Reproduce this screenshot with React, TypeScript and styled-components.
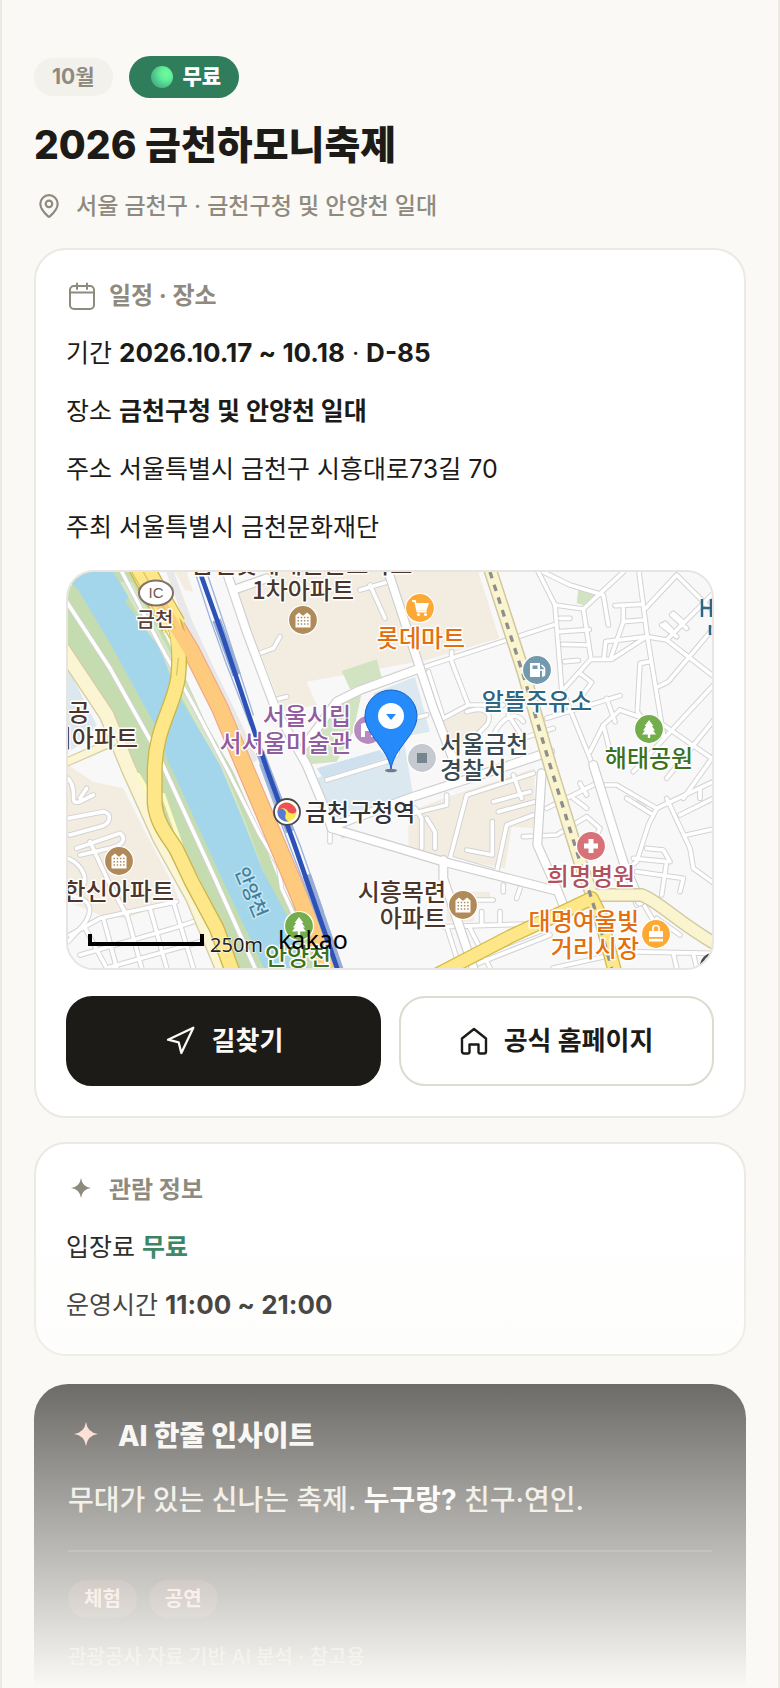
import React from "react";
import styled, { createGlobalStyle, css } from "styled-components";
import { MapPin, Navigation } from "lucide-react";

const FONT = `Inter, "Noto Sans CJK KR", sans-serif`;
const MAP_FONT = `"Noto Sans CJK KR", "Noto Sans", sans-serif`;

const c = {
  paper: "#faf9f5",
  ink: "#1c1b17",
  muted: "#8f8a7e",
  line: "#ebe9e2",
  green: "#2f7d5b",
};

const GlobalStyle = createGlobalStyle`
  *, *::before, *::after { box-sizing: border-box; }
  body { margin: 0; background: ${c.paper}; color: ${c.ink}; font-family: ${FONT}; }
  h1, h2, p { margin: 0; }
`;

const Screen = styled.main`
  position: relative;
  height: 100vh;
  overflow: hidden;
  padding: 56px 32px 0;
  border: solid ${c.line};
  border-width: 0 2px;
  background: ${c.paper};
`;

const Fade = styled.div`
  position: absolute;
  inset: auto 0 0;
  height: 476px;
  background: linear-gradient(to bottom, rgba(250, 249, 245, 0), ${c.paper});
  pointer-events: none;
`;

const Badges = styled.div`
  display: flex;
  align-items: center;
  gap: 16px;
  height: 42px;
`;

const Badge = styled.span<{ $free?: boolean }>`
  display: inline-flex;
  align-items: center;
  gap: 10px;
  height: 38px;
  padding: 0 18px;
  border-radius: 21px;
  font-size: 21px;
  line-height: 30px;
  font-weight: 700;
  color: ${c.muted};
  background: #f3f1ec;
  ${(p) =>
    p.$free &&
    css`
      height: 42px;
      padding: 0 18px 0 22px;
      font-weight: 800;
      color: #fff;
      background: ${c.green};
    `}
`;

const Orb = styled.i`
  width: 22px;
  height: 22px;
  border-radius: 50%;
  background: radial-gradient(circle at 70% 35%, #6cfba0 0, #62ee98 30%, #47b888 70%, #4c9c9c 100%);
`;

const Title = styled.h1`
  margin-top: 18px;
  font-size: 39px;
  line-height: 58px;
  font-weight: 800;
`;

const Place = styled.p`
  display: flex;
  align-items: center;
  gap: 14px;
  margin: 14px 0 24px 2px;
  font-size: 23px;
  line-height: 36px;
  font-weight: 500;
  color: ${c.muted};
`;

const Card = styled.section<{ $foot: number }>`
  margin-bottom: 24px;
  padding: 28px 30px ${(p) => p.$foot}px;
  border: 2px solid ${c.line};
  border-radius: 32px;
  background: #fff;
`;

const CardTitle = styled.h2`
  display: flex;
  align-items: center;
  gap: 13px;
  margin-bottom: 10px;
  font-size: 24px;
  line-height: 36px;
  font-weight: 700;
  color: ${c.muted};
`;

const Row = styled.p`
  font-size: 25px;
  line-height: 58px;
  font-weight: 400;
  strong { font-weight: 700; }
`;

const Figures = styled.strong`
  font-size: 26px;
`;

const Free = styled.strong`
  color: ${c.green};
`;

const MapFrame = styled.div`
  height: 400px;
  margin: 14px 0 26px;
  overflow: hidden;
  border: 2px solid #e8e4df;
  border-radius: 28px;
  background: #f8f8f8;
  svg { display: block; width: 100%; height: 100%; }
`;

const Actions = styled.div`
  display: grid;
  grid-template-columns: 1fr 1fr;
  gap: 18px;
`;

const Action = styled.button<{ $dark?: boolean }>`
  display: flex;
  align-items: center;
  justify-content: center;
  gap: 16px;
  height: 90px;
  padding: 0;
  border: 2px solid ${(p) => (p.$dark ? c.ink : "#dddad0")};
  border-radius: 26px;
  font: 700 26px/36px ${FONT};
  color: ${(p) => (p.$dark ? c.paper : c.ink)};
  background: ${(p) => (p.$dark ? c.ink : "#fff")};
`;

const Insight = styled.section`
  margin-top: 28px;
  padding: 32px 34px;
  border-radius: 34px;
  color: #f1f0ec;
  background: ${c.ink};
`;

const InsightTitle = styled.h2`
  display: flex;
  align-items: center;
  gap: 14px;
  font-size: 28px;
  line-height: 40px;
  font-weight: 800;
  color: #f6f5f1;
`;

const InsightText = styled.p`
  margin-top: 22px;
  padding-bottom: 28px;
  border-bottom: 2px solid #3d3c38;
  font-size: 28px;
  line-height: 44px;
  font-weight: 500;
  color: #e6e4dc;
  strong { font-weight: 700; color: #fff; }
`;

const Tags = styled.div`
  display: flex;
  gap: 12px;
  margin-top: 28px;
`;

const Tag = styled.span`
  padding: 0 16px;
  border-radius: 19px;
  font-size: 20px;
  line-height: 38px;
  font-weight: 700;
  color: #f9c9bd;
  background: #46312b;
`;

const Note = styled.p`
  margin-top: 24px;
  padding-bottom: 16px;
  font-size: 20px;
  line-height: 30px;
  font-weight: 500;
  color: #a8a498;
`;

const CalendarIcon = () => (
  <svg width="30" height="28" viewBox="0 0 30 28" fill="none" stroke="currentColor" strokeWidth="2" strokeLinecap="round" aria-hidden="true">
    <rect x="4" y="4" width="24" height="23" rx="4" />
    <path d="M4 10.500H28M11 1.500V7M21 1.500V7" />
  </svg>
);

const HomeIcon = () => (
  <svg width="28" height="28" viewBox="0 0 28 28" fill="none" stroke="currentColor" strokeWidth="2.400" strokeLinecap="round" strokeLinejoin="round" aria-hidden="true">
    <path d="M2 11.500 14 2 26 11.500V24.500A2 2 0 0 1 24 26.500H20A1.500 1.500 0 0 1 18.500 25V17.500H9.500V25A1.500 1.500 0 0 1 8 26.500H4A2 2 0 0 1 2 24.500Z" />
  </svg>
);

const SparkIcon = ({ box, r, fill }: { box: number; r: number; fill: string }) => (
  <svg width={box} height={box} viewBox={`${-box / 2} ${-box / 2 + 2} ${box} ${box}`} fill={fill} aria-hidden="true">
    <path d={`M0 ${-r}Q${r * 0.12} ${-r * 0.12} ${r} 0Q${r * 0.12} ${r * 0.12} 0 ${r}Q${-r * 0.12} ${r * 0.12} ${-r} 0Q${-r * 0.12} ${-r * 0.12} 0 ${-r}Z`} />
  </svg>
);

/* ---- map ---- */

const STREETS = [
  "M1435 21 1485 120 1505 370 1590 580 1610 640",
  "M1485 120 1570 132 1690 21",
  "M1450 21 1530 60 1630 90 1645 180",
  "M1570 132 1592 275",
  "M1095 305 1480 180",
  "M1512 372 1592 283 1655 283 1760 215 1820 225 1956 330",
  "M1737 21 1762 215 1812 520",
  "M1757 130 1850 30 1970 150",
  "M1820 225 1970 75",
  "M1632 280 1637 230 1760 215",
  "M1665 122 1742 118M1690 125V170L1750 165M1652 280 1690 170",
  "M1500 200 1588 194M1508 238 1585 240M1514 290 1555 286M1500 160 1530 160M1560 325 1595 352 1560 400",
  "M1795 365 1825 350 1960 190M1815 175 1835 195M1840 145 1868 170M1805 180 1850 215M1835 150 1880 190",
  "M1780 510 1732 440 1740 295 1770 290",
  "M1680 435 1630 480 1590 560M1680 435 1750 460 1810 480 1970 590",
  "M1630 480 1655 580M1640 400 1665 470",
  "M1820 640 1970 455M1720 620 1970 350M1870 700 1970 560",
  "M1175 260V290L1225 420H1330M1105 320 1150 460 1225 420",
  "M1460 460 1680 392M1345 450 1390 520 1480 490",
  "M1220 440C1280 420 1300 450 1280 480L1240 520M1300 510C1330 450 1370 440 1390 470",
  "M1460 730 1600 660H1670L1790 730 1970 645",
  "M1540 700 1580 730M1560 655 1580 690",
  "M1790 730 1765 780 1730 890 1670 940",
  "M1820 700 1890 850 1900 910 1970 960",
  "M1390 815 1490 810 1580 755 1620 790 1600 830",
  "M1720 880 1820 890 1805 990M1730 920 1870 940 1860 980M1760 850 1810 855 1830 890M1880 810 1970 790M1860 750 1960 700M1920 700V670",
  "M1710 960 1730 1020M1700 700 1780 750",
  "M1170 880 1220 690 1420 625M1170 880 1310 920 1340 780 1420 750",
  "M1300 710 1410 680M1360 630 1385 700M1315 740 1425 710M1297 770V870L1220 855",
  "M1065 730 1085 760V850M1100 760 1125 800V850M1040 750 1160 720V690",
  "M1150 1085 1470 1075M1160 1085 1200 1209M1230 1090 1290 1209M1265 1080V1040M1320 1070V1040M1230 1005H1300",
  "M1200 1190 1450 1095M1220 1209 1470 1110M1480 1209 1700 1160 1956 1165M1840 1165 1850 1209M1900 1165 1910 1209",
  "M1740 1000 1800 1100M1790 1060 1860 1110",
  "M1330 960V980M1380 970 1370 1000",
  "M24 640C60 680 20 720 60 710L100 690M60 700 80 670",
  "M24 760 130 740C160 745 150 780 120 785L30 810M50 850 180 805C200 820 190 840 150 850L60 870M90 830 150 960 200 1050",
  "M24 880C70 900 90 950 60 970M24 990C100 1000 100 1040 70 1080L24 1130M70 1080 140 1209",
  "M30 1110 120 1060 350 1010M60 1170 340 1090 430 1060M140 1209 420 1130M130 1060 170 1209M200 1045 245 1209M270 1030 320 1209M340 1010 400 1209",
  "M900 75 985 50M930 60 975 160M600 265 640 250 660 215",
  "M640 405 680 395M810 800V830M850 785V810",
  "M800 645 980 590M1010 570 1020 470 1100 450",
];

const MAJOR = [
  "M500 21 560 200 650 440 740 600 790 720 815 790",
  "M735 540 830 410 900 375 1080 310 985 21",
  "M1080 310 1120 430 1190 610",
  "M815 785 1060 695 1230 640 1470 560",
  "M815 790 1000 845 1150 890 1480 975",
  "M520 75 620 40",
  "M1445 625 1432 840 1490 970 1510 1020",
  "M1600 600 1690 890 1740 1010",
  "M1150 885V940L1200 1090 1240 1209",
];

type LabelProps = {
  x: number;
  y: number;
  color?: string;
  anchor?: "start" | "middle" | "end";
  size?: number;
  transform?: string;
  halo?: string;
  children: string;
};

const MapLabel = ({ x, y, color = "#4d3629", anchor = "middle", size = 24, transform, halo = "#fff", children }: LabelProps) => (
  <text
    x={x}
    y={y}
    fill={color}
    textAnchor={anchor}
    fontSize={size}
    fontWeight={500}
    stroke={halo}
    strokeWidth="3"
    strokeLinejoin="round"
    paintOrder="stroke"
    transform={transform}
  >
    {children}
  </text>
);

const Pin = ({ x, y, fill, children }: { x: number; y: number; fill: string; children?: React.ReactNode }) => (
  <g transform={`translate(${x} ${y})`}>
    <circle r="14.500" fill={fill} stroke="#fff" strokeWidth="1.200" />
    {children}
  </g>
);

const Apartment = () => (
  <>
    <path d="M-7.500 7.500V-4.500L-4-7.500-.500-4.500H.500L4-7.500 7.500-4.500V7.500Z" fill="#fff" />
    <path d="M-5.500-2.500H6M-5.500.700H6M-5.500 4H6" stroke="#b08a58" strokeWidth="1.500" strokeDasharray="1.500 1.700" />
  </>
);

const Tree = () => (
  <path d="M0-9 4.500-3H2.800L6 1.500H4L7 5.500H1.200V9H-1.200V5.500H-7L-4 1.500H-6L-2.800-3H-4.500Z" fill="#fff" />
);

const FestivalMap = () => (
  <svg viewBox="0 0 644 396" preserveAspectRatio="xMidYMid slice" role="img" aria-label="금천구청 주변 지도" fontFamily={MAP_FONT}>
    <rect width="644" height="396" fill="#f8f8f8" />
    <g transform="scale(.33333) translate(-24 -21)" fill="none" strokeLinejoin="round" strokeLinecap="round">
      {/* blocks */}
      <path fill="#f3ece1" d="M520 60 640 21H1255L1318 220 1100 285 740 350 770 420 670 440ZM345 21 375 75 400 80 380 21ZM24 600 100 650 190 670 250 790 340 960 355 1000 200 1060 120 1050 24 1010ZM1140 450 1220 430 1290 450 1250 530 1170 560ZM1045 740 1180 690 1425 610 1420 790 1355 785 1335 910 1170 880 1045 850ZM1160 980H1290V1000L1250 1010 1240 1070H1160Z" />
      <path fill="#dce8f0" d="M940 385 1065 335 1110 500 1030 515 1060 695 820 760 770 640 985 555ZM24 310 110 480 60 540 24 560ZM1740 695 1770 720 1740 735 1715 720Z" />
      <path fill="#cfe0ee" d="M770 610 960 555 975 580 790 640Z" />
      <path fill="#d2e3c2" d="M845 318 950 283 965 335 870 372ZM800 430 905 385 880 500 830 590 730 600 730 560ZM1555 72 1610 92 1590 125 1550 115Z" />
      <path fill="#f3ece1" d="M24 1180 60 1209H24Z" />

      {/* city streets */}
      {STREETS.map((d) => <path key={d} d={d} stroke="#d3d3d3" strokeWidth="17" />)}
      {STREETS.map((d) => <path key={d} d={d} stroke="#fff" strokeWidth="11" />)}
      {MAJOR.map((d) => <path key={d} d={d} stroke="#cfcfcf" strokeWidth="30" />)}
      {MAJOR.map((d) => <path key={d} d={d} stroke="#fff" strokeWidth="23" />)}

      {/* stream and its banks */}
      <path fill="#c5dcb0" d="M0 21H215L310 200 340 260 440 480 520 620 600 800 650 930 720 1060 790 1209H530L400 930 310 760 200 600 130 450 0 210Z" />
      <path fill="#d5e6c4" d="M180 50 300 270 470 600 560 800 640 1000 560 780 440 480 340 280 215 50Z" />
      <path fill="#a3d6ea" d="M24 21H160L205 95 195 110 300 250 350 380 480 600 555 780 610 920 680 1050 745 1209H612L490 950 325 590 290 490 150 235 55 75 24 45Z" />
      <path stroke="#d3d3d3" strokeWidth="16" d="M0 80 150 310 290 560 345 680 460 930 590 1220" />
      <path stroke="#fff" strokeWidth="11" d="M0 80 150 310 290 560 345 680 460 930 590 1220" />
      <path stroke="#d3d3d3" strokeWidth="15" d="M180 10 300 240 400 420 500 610 600 810 655 900 665 970 720 1090" />
      <path stroke="#fff" strokeWidth="10" d="M180 10 300 240 400 420 500 610 600 810 655 900 665 970 720 1090" />

      {/* riverside road */}
      <path stroke="#d6cda2" strokeWidth="48" strokeLinecap="butt" d="M0 240 140 450 205 610 300 820 400 1000 500 1240" />
      <path stroke="#fbf5d3" strokeWidth="40" strokeLinecap="butt" d="M0 240 140 450 205 610 300 820 400 1000 500 1240" />
      <path stroke="#d6cda2" strokeWidth="28" d="M0 600 160 530" />
      <path stroke="#fbf5d3" strokeWidth="21" d="M0 600 160 530" />
      <path stroke="#fffac4" strokeWidth="12" d="M235 630 275 700M310 690 370 860 470 1060" />

      {/* expressway */}
      <path stroke="#e8e8e8" strokeWidth="22" d="M330 21 385 170 460 330 520 450 580 580" />
      <path stroke="#f0a886" strokeWidth="54" strokeLinecap="butt" d="M305 110 395 260 480 430 560 620 640 810 720 1000 812 1230" />
      <path stroke="#fecb7e" strokeWidth="47" strokeLinecap="butt" d="M305 110 395 260 480 430 560 620 640 810 720 1000 812 1230" />
      <path stroke="#cbb64e" strokeWidth="78" strokeLinecap="butt" d="M240 0 300 110 340 180" />
      <path stroke="#fee788" strokeWidth="70" strokeLinecap="butt" d="M240 0 300 110 345 188" />
      <path stroke="#cbb64e" strokeWidth="48" d="M345 180C365 240 357 310 354 340 340 430 285 490 284 620V715C290 780 330 820 350 855L395 950 470 1090 525 1240" />
      <path stroke="#fee788" strokeWidth="40" d="M340 170C365 240 357 310 354 340 340 430 285 490 284 620V715C290 780 330 820 350 855L395 950 470 1090 525 1240" />
      <path stroke="#fecb7e" strokeWidth="34" strokeLinecap="butt" d="M305 120 400 275" />
      <path stroke="#d9c660" strokeWidth="4" d="M215 21 330 220M250 21 345 190M355 280 350 330" />

      {/* railway */}
      <path stroke="#9db3dc" strokeWidth="4" d="M408 30 450 160 500 300 570 480M440 21 500 200 580 450M640 640 720 840 790 1040M600 600 680 820 780 1080" />
      <path stroke="#98add6" strokeWidth="26" strokeLinecap="butt" d="M470 165 530 330M600 560 690 800M740 930 840 1220" />
      <path stroke="#2d52b7" strokeWidth="14" d="M425 36 485 205 560 430 620 610 700 830 835 1220" />

      {/* arterial roads */}
      <path stroke="#cfc8a0" strokeWidth="42" strokeLinecap="butt" d="M1286 0 1390 320 1470 600 1560 890 1600 1000M1600 990H1745C1800 1010 1860 1080 1990 1150" />
      <path stroke="#fbf5cf" strokeWidth="33" strokeLinecap="butt" d="M1286 0 1390 320 1470 600 1560 890 1600 1000M1600 990H1745C1800 1010 1860 1080 1990 1150" />
      <path stroke="#d3bd4b" strokeWidth="44" d="M1110 1240 1350 1115 1500 1045 1595 1000 1620 1050 1670 1240" />
      <path stroke="#fee788" strokeWidth="36" d="M1110 1240 1350 1115 1500 1045 1595 1000 1620 1050 1670 1240" />
      <path stroke="#8e8e8e" strokeWidth="10" strokeLinecap="butt" strokeDasharray="20 20" d="M1290 21 1390 330 1470 600 1560 890 1610 1050 1655 1209" />
    </g>

    {/* places */}
    <ellipse cx="88" cy="21" rx="17" ry="12.500" fill="#fff" stroke="#84706a" strokeWidth="2" />
    <text x="88" y="26" textAnchor="middle" fontSize="15" fontFamily="Liberation Sans, sans-serif" fill="#6b5a52">IC</text>
    <MapLabel x={87} y={55} size={20} color="#5a4035">금천</MapLabel>
    <MapLabel x={234} y={1}>금천롯데캐슬골드파크</MapLabel>
    <MapLabel x={235} y={27}>1차아파트</MapLabel>
    <Pin x={235} y={48} fill="#b08a58"><Apartment /></Pin>

    <Pin x={352} y={36} fill="#fda935">
      <path d="M-8-7H-5L-2.500 3.500H6.500" fill="none" stroke="#fff" strokeWidth="1.800" />
      <path d="M-4.500-5H9L6.500 2.500H-2.700Z" fill="#fff" />
      <circle cx="-1.500" cy="6.500" r="1.500" fill="#fff" />
      <circle cx="5.500" cy="6.500" r="1.500" fill="#fff" />
    </Pin>
    <MapLabel x={353} y={75} color="#e2700f">롯데마트</MapLabel>

    <Pin x={469} y={98} fill="#7299ad">
      <path d="M-7-7H3V7H-7Z" fill="#fff" />
      <path d="M-4.500-4.500H.500V-1H-4.500Z" fill="#7299ad" />
      <path d="M4.500-5 7.500-2V4Q7.500 6 5.800 6V0H3" fill="none" stroke="#fff" strokeWidth="1.600" />
    </Pin>
    <MapLabel x={469} y={138} color="#2f6681">알뜰주유소</MapLabel>

    <Pin x={581} y={157} fill="#74ad4c"><Tree /></Pin>
    <MapLabel x={581} y={195} color="#3a7320">해태공원</MapLabel>

    <MapLabel x={283} y={153} anchor="end" color="#915ca0">서울시립</MapLabel>
    <MapLabel x={284} y={180} anchor="end" color="#915ca0">서서울미술관</MapLabel>
    <Pin x={300} y={158} fill="#b78bbf">
      <path d="M-7-6Q-2-9 0-6H7V7H3V1H-3V7H-7Z" fill="#fff" />
    </Pin>

    <Pin x={354} y={186} fill="#c6c9cf"><rect x="-5" y="-5" width="10" height="10" fill="#74868e" /></Pin>
    <MapLabel x={372} y={181} anchor="start" color="#3b4a50">서울금천</MapLabel>
    <MapLabel x={372} y={207} anchor="start" color="#3b4a50">경찰서</MapLabel>

    <g transform="translate(219 240)">
      <circle r="13" fill="#fff" stroke="#4a4a4a" strokeWidth="1.800" />
      <circle r="9.500" fill="#fdea50" />
      <path d="M-9.500-1A9.500 9.500 0 0 1-3-9.200Q5-11 9.500-2 9 2 5 1.500 1 1 0-2-3-5-6.500-3Q-9-2-9.500-1Z" fill="#ee5257" />
      <path d="M-9.500-1Q-8-4-4-3 0-1-1.500 3-3 8 2 9.300A9.500 9.500 0 0 1-9.500-1Z" fill="#5879d4" />
    </g>
    <MapLabel x={237} y={249} anchor="start" color="#333">금천구청역</MapLabel>

    <MapLabel x={22} y={149} anchor="end">공</MapLabel>
    <MapLabel x={70} y={175} anchor="end">지아파트</MapLabel>
    <Pin x={51} y={289} fill="#b08a58"><Apartment /></Pin>
    <MapLabel x={106} y={328} anchor="end">한신아파트</MapLabel>

    <MapLabel x={0} y={0} size={19} color="#41809f" halo="#c5e5f1" transform="translate(177 323) rotate(67)">안양천</MapLabel>

    <Pin x={231} y={354} fill="#74ad4c"><Tree /></Pin>
    <MapLabel x={230} y={393} color="#3a7320">안양천</MapLabel>

    <Pin x={523} y={274} fill="#d87279"><path d="M-2.500-7H2.500V-2.500H7V2.500H2.500V7H-2.500V2.500H-7V-2.500H-2.500Z" fill="#fff" /></Pin>
    <MapLabel x={523} y={313} color="#b4505c">희명병원</MapLabel>

    <MapLabel x={378} y={329} anchor="end">시흥목련</MapLabel>
    <MapLabel x={378} y={355} anchor="end">아파트</MapLabel>
    <Pin x={395} y={333} fill="#b08a58"><Apartment /></Pin>

    <MapLabel x={571} y={358} anchor="end" color="#e2700f">대명여울빛</MapLabel>
    <MapLabel x={571} y={385} anchor="end" color="#e2700f">거리시장</MapLabel>
    <Pin x={588} y={362} fill="#fda935">
      <path d="M-7-3H7V3H-7ZM-7 4.800H7V7.500H-7Z" fill="#fff" />
      <path d="M-3-3V-6A3 2.500 0 0 1 3-6V-3" fill="none" stroke="#fff" strokeWidth="1.600" />
    </Pin>

    <g fill="none" strokeWidth="2.500">
      <path d="M634 27V45M634 36H644M643 27V45M642 53V63" stroke="#2f6681" />
      <path d="M633 393A13 13 0 0 1 644 382" stroke="#4a4a4a" />
    </g>

    {/* scale and attribution */}
    <path d="M22 362V372H134V362" fill="none" stroke="#000" strokeWidth="4" />
    <text x="142" y="380" fontSize="20" fontFamily="Noto Sans, sans-serif" fill="#222" stroke="#fff" strokeWidth="1" paintOrder="stroke">250m</text>
    <text x="210" y="377" fontSize="25" fontFamily="Noto Sans, sans-serif" fontWeight="400" fill="#000">kakao</text>

    {/* festival marker */}
    <ellipse cx="323" cy="198.500" rx="6" ry="1.800" fill="#555" opacity=".75" />
    <path d="M323 197C320 176 297 163 297 144A26 26 0 0 1 349 144C349 163 326 176 323 197Z" fill="#258bfb" stroke="#1560c4" strokeWidth="1" />
    <circle cx="323" cy="144" r="13" fill="#fff" />
    <path d="M318 142H328L323 148Z" fill="#258bfb" />
  </svg>
);

export default function App() {
  return (
    <>
      <GlobalStyle />
      <Screen>
        <Badges>
          <Badge>10월</Badge>
          <Badge $free><Orb />무료</Badge>
        </Badges>
        <Title>2026 금천하모니축제</Title>
        <Place>
          <MapPin size={26} strokeWidth={2} />
          서울 금천구 · 금천구청 및 안양천 일대
        </Place>

        <Card $foot={30}>
          <CardTitle><CalendarIcon />일정 · 장소</CardTitle>
          <Row>기간 <Figures>2026.10.17 ~ 10.18</Figures> · <Figures>D-85</Figures></Row>
          <Row>장소 <strong>금천구청 및 안양천 일대</strong></Row>
          <Row>주소 서울특별시 금천구 시흥대로73길 70</Row>
          <Row>주최 서울특별시 금천문화재단</Row>
          <MapFrame><FestivalMap /></MapFrame>
          <Actions>
            <Action type="button" $dark><Navigation size={32} strokeWidth={1.7} />길찾기</Action>
            <Action type="button"><HomeIcon />공식 홈페이지</Action>
          </Actions>
        </Card>

        <Card $foot={20}>
          <CardTitle><SparkIcon box={30} r={10} fill={c.muted} />관람 정보</CardTitle>
          <Row>입장료 <Free>무료</Free></Row>
          <Row>운영시간 <Figures>11:00 ~ 21:00</Figures></Row>
        </Card>

        <Insight>
          <InsightTitle><SparkIcon box={36} r={12} fill="#ffccbd" />AI 한줄 인사이트</InsightTitle>
          <InsightText>무대가 있는 신나는 축제. <strong>누구랑?</strong> 친구·연인.</InsightText>
          <Tags>
            <Tag>체험</Tag>
            <Tag>공연</Tag>
          </Tags>
          <Note>관광공사 자료 기반 AI 분석 · 참고용</Note>
        </Insight>
        <Fade />
      </Screen>
    </>
  );
}
